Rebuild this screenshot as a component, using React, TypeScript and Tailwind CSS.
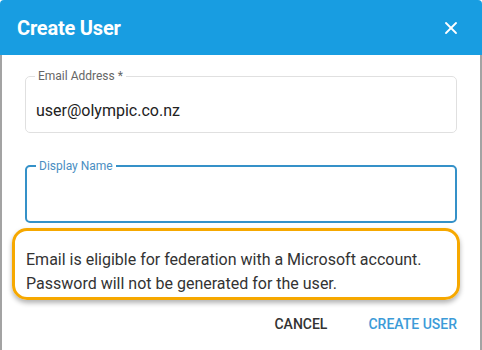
import { X } from "lucide-react";

export default function App() {
  return (
    <div className="w-[482px] h-[350px] bg-white font-['Roboto',sans-serif] overflow-hidden">
      <header className="h-[55px] bg-[#189de1] rounded-t-[4px] flex items-center justify-between pl-[17px] pr-[21px]">
        <h1 className="text-white text-[20px] font-bold tracking-[-0.2px] pt-[1px]">Create User</h1>
        <X className="h-[20px] w-[20px] text-white" strokeWidth={2.2} />
      </header>

      <div className="h-[295px] border-x-2 border-[#a3a3a3] flex flex-col">
        <div className="px-[23px] pt-[14px] flex flex-col gap-[26px]">
          <fieldset className="border border-[#e0e0e0] rounded-[5px] h-[64px] px-[10px]">
            <legend className="text-[12px] text-[#666] px-[3px] ml-[-1px] leading-[14px]">
              Email Address *
            </legend>
            <div className="text-[16px] text-[#222] pt-[16px]">user@olympic.co.nz</div>
          </fieldset>

          <fieldset className="border-2 border-[#3591c8] rounded-[5px] h-[64px] px-[9px]">
            <legend className="text-[12px] text-[#4a8ec2] px-[3px] leading-[14px]">
              Display Name
            </legend>
          </fieldset>
        </div>

        <div className="ml-[10px] mr-[20px] mt-[5px] h-[72px] border-[3px] border-[#f6a800] rounded-[15px] shadow-[0_3px_5px_rgba(0,0,0,0.3)] flex flex-col justify-end pb-[1px] pl-[11px] text-[16px] text-[#333] leading-[24px]">
          <p>Email is eligible for federation with a Microsoft account.</p>
          <p>Password will not be generated for the user.</p>
        </div>

        <div className="flex justify-end gap-[41px] pr-[23px] pt-[14px] text-[14px] font-medium">
          <button className="text-[#333]">CANCEL</button>
          <button className="text-[#3c9bd8]">CREATE USER</button>
        </div>
      </div>
    </div>
  );
}
